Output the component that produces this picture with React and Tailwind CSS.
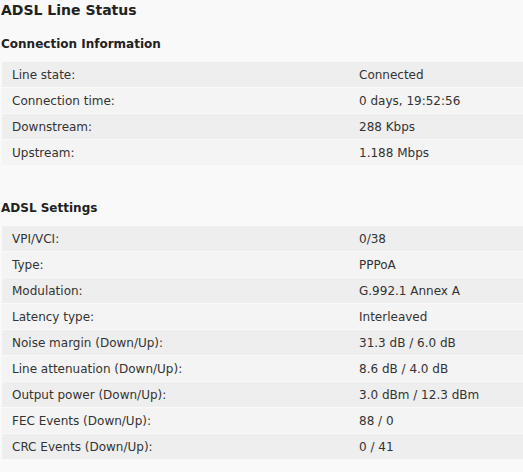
import React from 'react';

const connection = [
  ['Line state:', 'Connected'],
  ['Connection time:', '0 days, 19:52:56'],
  ['Downstream:', '288 Kbps'],
  ['Upstream:', '1.188 Mbps'],
];

const settings = [
  ['VPI/VCI:', '0/38'],
  ['Type:', 'PPPoA'],
  ['Modulation:', 'G.992.1 Annex A'],
  ['Latency type:', 'Interleaved'],
  ['Noise margin (Down/Up):', '31.3 dB / 6.0 dB'],
  ['Line attenuation (Down/Up):', '8.6 dB / 4.0 dB'],
  ['Output power (Down/Up):', '3.0 dBm / 12.3 dBm'],
  ['FEC Events (Down/Up):', '88 / 0'],
  ['CRC Events (Down/Up):', '0 / 41'],
];

const InfoTable = ({ rows }) => (
  <div className="ml-[2px] flex flex-col gap-px">
    {rows.map(([label, value], i) => (
      <div
        key={label}
        className={`flex h-[25px] items-center ${i % 2 === 0 ? 'bg-[#eeeeee]' : 'bg-[#f4f4f4]'}`}
      >
        <div className="w-[357px] pl-[10px]">{label}</div>
        <div>{value}</div>
      </div>
    ))}
  </div>
);

export default function App() {
  return (
    <div
      className="min-h-screen bg-[#f9f9f9] text-[12px] text-[#333333]"
      style={{ fontFamily: 'Verdana, "DejaVu Sans", sans-serif' }}
    >
      <h1 className="px-[1px] pt-[1px] text-[14px] font-bold leading-[18px] text-[#222222]">ADSL Line Status</h1>

      <h2 className="mt-[17px] mb-[10px] pl-[1px] text-[12px] font-bold leading-[16px] text-[#222222]">
        Connection Information
      </h2>
      <InfoTable rows={connection} />

      <h2 className="mt-[35px] mb-[10px] pl-[1px] text-[12px] font-bold leading-[16px] text-[#222222]">
        ADSL Settings
      </h2>
      <InfoTable rows={settings} />
    </div>
  );
}
